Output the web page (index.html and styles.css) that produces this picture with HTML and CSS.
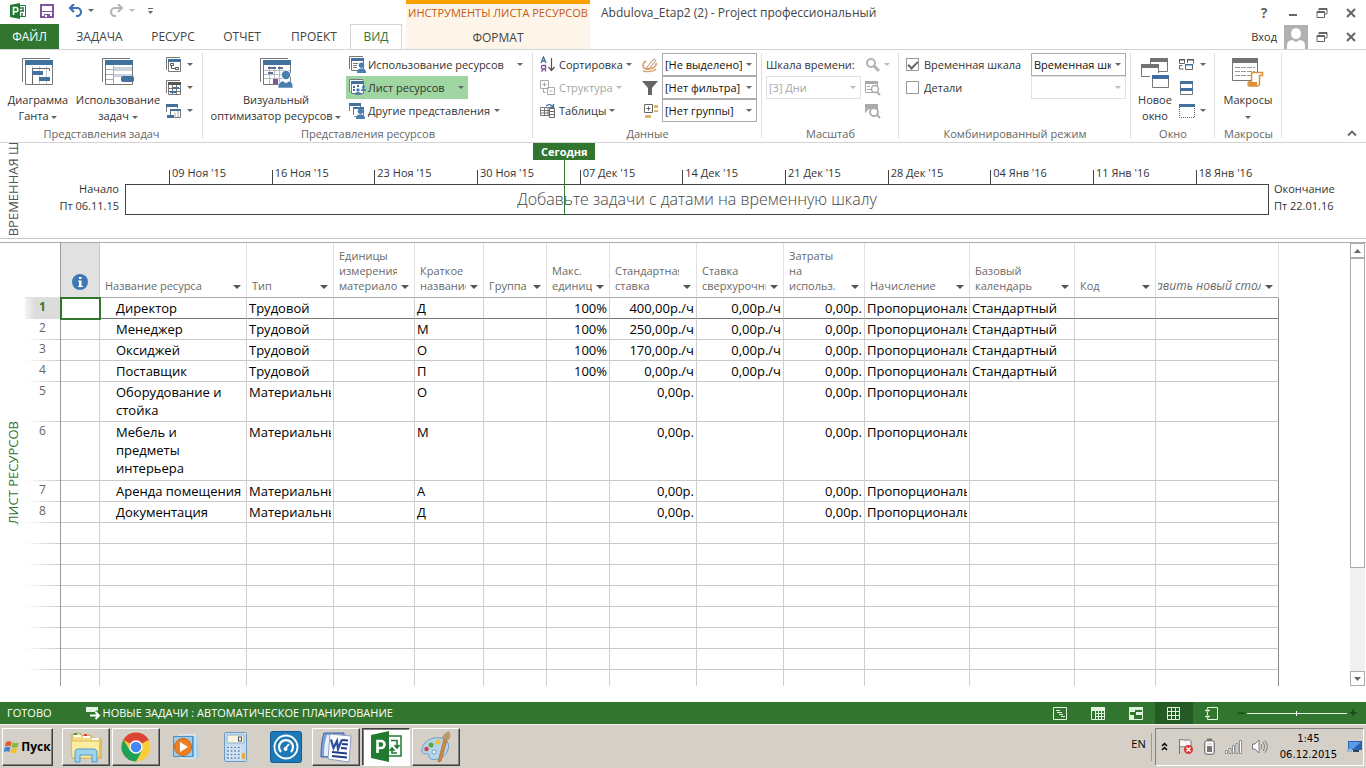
FILE: index.html
```html
<!DOCTYPE html>
<html lang="ru">
<head>
<meta charset="utf-8">
<title>Abdulova_Etap2 (2) - Project профессиональный</title>
<link rel="stylesheet" href="styles.css">
</head>
<body>
<svg class="defs" aria-hidden="true">
  <symbol id="restore" viewBox="0 0 12 12"><path d="M3 1.500h8v5.500h-2.500M3 1.500v2M3 2.500h8M1 4.500h7.500v6H1zM1 5.500h7.500" fill="none" stroke="#666"/></symbol>
  <symbol id="close" viewBox="0 0 12 12"><path d="M2 2l8 8M10 2l-8 8" stroke="#666" stroke-width="2"/></symbol>
  <symbol id="person" viewBox="0 0 10 12"><circle cx="5" cy="3.500" r="3" fill="#4a7db1"/><path d="M0 12c0-4 2-5 5-5s5 1 5 5z" fill="#4a7db1"/></symbol>
</svg>

<header class="head">
  <div class="head-left">
    <div class="qat">
      <svg class="logo" width="17" height="16" viewBox="0 0 17 16"><path d="M8 2.500h7.500v11H8" fill="#fff" stroke="#217346"/><path d="M10 5h4M10 8h4M12 10v3M13 6v2" stroke="#217346" stroke-width="1.500"/><path d="M0 2L10 0v16L0 14z" fill="#217a30"/><path d="M3.500 12V4.500h2.200a2 2 0 0 1 0 4.300H3.500" fill="none" stroke="#fff" stroke-width="1.600"/></svg>
      <button class="plain save" aria-label="Сохранить"><svg width="14" height="14" viewBox="0 0 14 14"><path d="M1 1h12v12H1z" fill="#fff" stroke="#80539f" stroke-width="2"/><path d="M2 7h10v1H2zM4 10h6v3H4z" fill="#80539f"/><path d="M5 11h2v2H5z" fill="#fff"/></svg></button>
      <button class="plain undo" aria-label="Отменить"><svg width="15" height="13" viewBox="0 0 15 13"><path d="M2 4h7a4 4 0 0 1 0 8H8M6 0L2 4l4 4" fill="none" stroke="#3b6fb6" stroke-width="2.200"/></svg><i class="arr"></i></button>
      <button class="plain redo" aria-label="Вернуть"><svg width="15" height="13" viewBox="0 0 15 13"><path d="M13 4H6a4 4 0 0 0 0 8h1M9 0l4 4-4 4" fill="none" stroke="#b5b5b5" stroke-width="2.200"/></svg><i class="arr dim"></i></button>
      <button class="plain more" aria-label="Настройка"><svg width="7" height="8" viewBox="0 0 7 8"><path d="M1 1.500h5" stroke="#666"/><path d="M1 4h5L3.500 7z" fill="#666"/></svg></button>
    </div>
    <nav class="tabs">
      <a href="#" class="file">ФАЙЛ</a><a href="#">ЗАДАЧА</a><a href="#">РЕСУРС</a><a href="#">ОТЧЕТ</a><a href="#">ПРОЕКТ</a><a href="#" class="on">ВИД</a>
    </nav>
  </div>
  <div class="context">
    <div class="context-name">ИНСТРУМЕНТЫ ЛИСТА РЕСУРСОВ</div>
    <a href="#">ФОРМАТ</a>
  </div>
  <div class="head-right">
    <div class="title-row">
      <h1>Abdulova_Etap2 (2) - Project профессиональный</h1>
      <div class="win">
        <button class="plain help" aria-label="Справка">?</button>
        <button class="plain" aria-label="Свернуть"><svg width="12" height="12"><path d="M2 8h8" stroke="#666" stroke-width="2"/></svg></button>
        <button class="plain" aria-label="Восстановить"><svg width="12" height="12"><use href="#restore"/></svg></button>
        <button class="plain" aria-label="Закрыть"><svg width="12" height="12"><use href="#close"/></svg></button>
      </div>
    </div>
    <div class="login-row">
      <a href="#">Вход</a>
      <svg class="avatar" width="24" height="24" viewBox="0 0 24 24"><path d="M0 0h24v24H0z" fill="#b1b1b1"/><ellipse cx="12" cy="8.500" rx="5" ry="5.500" fill="#fff"/><path d="M3 24v-4c0-3 2-4.500 5-5l4 2 4-2c3 .5 5 2 5 5v4z" fill="#fff"/></svg>
      <div class="win">
        <button class="plain" aria-label="Восстановить окно"><svg width="12" height="12"><use href="#restore"/></svg></button>
        <button class="plain" aria-label="Закрыть окно"><svg width="12" height="12"><use href="#close"/></svg></button>
      </div>
    </div>
  </div>
</header>

<section class="ribbon">
  <div class="group g-tasks">
    <div class="tools">
      <button class="big b-gantt"><svg width="32" height="28" viewBox="0 0 32 28"><path d="M.5 24V.5H28" fill="none" stroke="#777"/><path d="M3.500 3.500h27v23h-27z" fill="#fff" stroke="#777"/><path d="M3 2h28v5H3z" fill="#41719c"/><path d="M10.500 8v18M17.500 8v18M24.500 8v18" stroke="#c9cdd3"/><path d="M10.500 14v-3.500h17V13M10.500 17v9" fill="none" stroke="#666"/><path d="M10 13h11v4H10zM17 19h11v4H17z" fill="#41719c"/></svg><span>Диаграмма<br>Ганта <i class="arr"></i></span></button>
      <button class="big b-usage"><svg width="32" height="28" viewBox="0 0 32 28"><path d="M.5 24V.5H28" fill="none" stroke="#777"/><path d="M3.500 3.500h27v23h-27z" fill="#fff" stroke="#777"/><path d="M3 2h28v5H3z" fill="#41719c"/><path d="M12 9h18v4H12zM12 16h18v3H12z" fill="#ccd3dc"/><path d="M11.500 8v18M4 11.500h8M4 16.500h8M4 21.500h8" stroke="#aaa" fill="none"/><rect x="19" y="18" width="13" height="6" rx="2" fill="#41719c"/></svg><span>Использование<br>задач <i class="arr"></i></span></button>
      <div class="minis">
        <button class="plain" aria-label="Сетевой график"><svg width="16" height="16" viewBox="0 0 16 16"><path d="M.5 13V.5H14M2.500 2.500h12v12h-12z" fill="none" stroke="#777"/><path d="M2 2h13v3H2z" fill="#41719c"/><path d="M4.500 6.500h3v2h-3zM9.500 10.500h3v2h-3zM5.500 9v2.500h4" fill="none" stroke="#555"/></svg><i class="arr"></i></button>
        <button class="plain" aria-label="Календарь"><svg width="16" height="16" viewBox="0 0 16 16"><path d="M.5 13V.5H14M2.500 2.500h12v12h-12zM2 8.500h13M2 11.500h13M6.500 5v10M10.500 5v10" fill="none" stroke="#777"/><path d="M2 2h13v3H2z" fill="#555"/><path d="M7 7h6v2H7zM4 11h6v2H4z" fill="#41719c"/></svg><i class="arr"></i></button>
        <button class="plain" aria-label="Другие представления задач"><svg width="16" height="16" viewBox="0 0 16 16"><path d="M.5 9V1.500h11V5M4.500 13V6.500h10v8h-6" fill="#fff" stroke="#777"/><path d="M0 1h12v3H0zM4 6h11v2H4zM1 12h7v3H1z" fill="#41719c"/><path d="M9 10v4M12 8v6" stroke="#aaa"/></svg><i class="arr"></i></button>
      </div>
    </div>
    <h2>Представления задач</h2>
  </div>

  <div class="group g-res">
    <div class="tools">
      <button class="big b-planner"><svg width="33" height="30" viewBox="0 0 33 30"><path d="M.5 24V.5H28" fill="none" stroke="#777"/><path d="M3.500 3.500h27v23h-27z" fill="#fff" stroke="#777"/><path d="M3 2h28v5H3z" fill="#41719c"/><path d="M4 12.500h26M4 16.500h26M4 20.500h20M9.500 8v18M14.500 8v18M19.500 8v18" stroke="#b5bac3"/><path d="M8 9h8v2H8zM18 9h5v2h-5zM8 14h5v2H8z" fill="#5f6f8c"/><path d="M13 21h5v5h-5z" fill="#80539f"/><g transform="translate(18 12)"><circle cx="8" cy="5" r="5" fill="#fff"/><circle cx="8" cy="5" r="4.200" fill="#4a7db1"/><path d="M0 18c0-5 3-7 5-7l3 2 3-2c2 0 4 2 4 7z" fill="#4a7db1" stroke="#fff" stroke-width=".6"/></g></svg><span>Визуальный<br>оптимизатор ресурсов <i class="arr"></i></span></button>
      <div class="rows r-views">
        <button class="row"><svg width="17" height="17" viewBox="0 0 17 17"><path d="M.5 13V.5H14M2.500 2.500h12v12h-12z" fill="#fff" stroke="#777"/><path d="M2 2h13v3H2z" fill="#41719c"/><path d="M4 7.500h5M4 9.500h4M4 11.500h4" stroke="#777"/><use href="#person" x="8" y="6" width="9" height="11"/></svg>Использование ресурсов<i class="arr push"></i></button>
        <button class="row sel"><svg width="17" height="17" viewBox="0 0 17 17"><path d="M.5 13V.5H14M2.500 2.500h12v12h-12z" fill="#fff" stroke="#777"/><path d="M2 2h13v3H2z" fill="#41719c"/><path d="M4 8h2M4 11h2M8 7h2" stroke="#41719c" stroke-width="2"/><use href="#person" x="6" y="9" width="6" height="7"/><use href="#person" x="12" y="6" width="5" height="6"/></svg>Лист ресурсов<i class="arr push"></i></button>
        <button class="row"><svg width="17" height="17" viewBox="0 0 17 17"><path d="M.5 9V1.500h11V5M4.500 13V5.500h10v9h-9" fill="#fff" stroke="#777"/><path d="M0 1h12v3H0zM4 5h11v2H4z" fill="#41719c"/><use href="#person" x="7" y="6" width="9" height="11"/></svg>Другие представления<i class="arr next"></i></button>
      </div>
    </div>
    <h2>Представления ресурсов</h2>
  </div>

  <div class="group g-data">
    <div class="tools">
      <div class="rows">
        <button class="row"><svg width="16" height="17" viewBox="0 0 16 17"><path d="M1 7l2.500-6L6 7M2 5h3" fill="none" stroke="#41719c" stroke-width="1.300"/><path d="M5.500 15.500V9.500H3a1.500 1.500 0 0 0 0 3.500h2.500M3.500 13l-2 2.500" fill="none" stroke="#80539f" stroke-width="1.300"/><path d="M11.500 2v12M8.500 11l3 3.500 3-3.500" fill="none" stroke="#555" stroke-width="1.200"/></svg>Сортировка<i class="arr"></i></button>
        <button class="row off" disabled><svg width="16" height="16" viewBox="0 0 16 16"><path d="M.5.500h8v8h-8zM2.500 4.500h4M4.500 2.500v4M7.500 7.500h7v7h-7zM9.500 11h3M3.500 9v3.500H6" fill="#fff" stroke="#aaa"/></svg>Структура<i class="arr dim"></i></button>
        <button class="row"><svg width="16" height="16" viewBox="0 0 16 16"><path d="M.5 4.500h11v8H.5zM0 7.500h12M0 10h12M4.500 4v9M8 4v9" fill="none" stroke="#777"/><path d="M9.500 5.500h5v9h-5zM9 8.500h6M9 11.500h6" fill="#fff" stroke="#666"/><path d="M6 3c2-2 5-2 7 1M13.500 1v3.500H10" fill="none" stroke="#41719c" stroke-width="1.400"/></svg>Таблицы<i class="arr"></i></button>
      </div>
      <div class="pairs">
        <div class="pair"><svg width="16" height="16" viewBox="0 0 16 16"><path d="M4 4C0 6 0 12 5 12s10-2 9-6" fill="none" stroke="#dba46c" stroke-width="1.800"/><path d="M1 14c5 1 10 1 13-2" fill="none" stroke="#dba46c" stroke-width="1.300"/><path d="M5 10l7-8 2 1.500-7 8-2.500.5z" fill="#fff" stroke="#bc8a68"/></svg><span class="combo"><select aria-label="Выделение"><option>[Не выделено]</option></select></span></div>
        <div class="pair"><svg width="16" height="16" viewBox="0 0 16 16"><path d="M0 1h16L10 8v7H6V8z" fill="#666"/></svg><span class="combo"><select aria-label="Фильтр"><option>[Нет фильтра]</option></select></span></div>
        <div class="pair"><svg width="16" height="16" viewBox="0 0 16 16"><path d="M2.500 1.500h8v8h-8zM4.500 5.500h4M6.500 3.500v4" fill="#fff" stroke="#666"/><path d="M12 2h4v3h-4zM12 7h4v2h-4zM3 12h6v3H3z" fill="#dcb66d"/></svg><span class="combo"><select aria-label="Группировка"><option>[Нет группы]</option></select></span></div>
      </div>
    </div>
    <h2>Данные</h2>
  </div>

  <div class="group g-zoom">
    <div class="tools">
      <div class="rows">
        <label class="row" for="scale">Шкала времени:</label>
        <span class="combo off"><select id="scale" disabled><option>[3] Дни</option></select></span>
      </div>
      <div class="minis">
        <button class="plain" disabled aria-label="Масштаб"><svg width="16" height="16" viewBox="0 0 16 16"><circle cx="6" cy="6" r="4" fill="none" stroke="#b3b3b3" stroke-width="2"/><path d="M9 9l5 5" stroke="#b3b3b3" stroke-width="3"/></svg><i class="arr dim"></i></button>
        <button class="plain" disabled aria-label="Весь проект"><svg width="16" height="16" viewBox="0 0 16 16"><path d="M.5 1.500h12v11H.5z" fill="none" stroke="#aaa"/><path d="M0 1h13v3H0zM2 6h3v1H2zM2 9h4v1H2z" fill="#aaa"/><circle cx="10" cy="9" r="3.500" fill="#fff" stroke="#aaa" stroke-width="1.500"/><path d="M12 12l3 3" stroke="#aaa" stroke-width="2"/></svg></button>
        <button class="plain" disabled aria-label="Выделенные задачи"><svg width="16" height="16" viewBox="0 0 16 16"><path d="M0 1h13v5H4l-4 4z" fill="#aaa"/><circle cx="9" cy="9" r="4" fill="#fff" stroke="#aaa" stroke-width="1.800"/><path d="M12 12l3 3" stroke="#aaa" stroke-width="2"/></svg></button>
      </div>
    </div>
    <h2>Масштаб</h2>
  </div>

  <div class="group g-split">
    <div class="tools">
      <div class="rows">
        <label class="row check"><input type="checkbox" checked>Временная шкала</label>
        <label class="row check"><input type="checkbox">Детали</label>
      </div>
      <div class="rows">
        <span class="combo"><select aria-label="Временная шкала"><option>Временная шкала</option></select></span>
        <span class="combo off"><select aria-label="Детали" disabled><option></option></select></span>
      </div>
    </div>
    <h2>Комбинированный режим</h2>
  </div>

  <div class="group g-window">
    <div class="tools">
      <button class="big b-new"><svg width="28" height="32" viewBox="0 0 28 32"><path d="M9.500 1.500h17v12h-17z" fill="#fff" stroke="#777"/><path d="M9 0h18v4H9z" fill="#737373"/><path d="M.5 7.500h17v11H.5z" fill="#fff" stroke="#777"/><path d="M0 6h18v4H0z" fill="#737373"/><path d="M9 15h19v16H9z" fill="#fff"/><path d="M11.500 17.500h16v12h-16z" fill="#fff" stroke="#777"/><path d="M11 17h17v4H11z" fill="#3c6ea5"/></svg><span>Новое<br>окно</span></button>
      <div class="minis">
        <button class="plain" aria-label="Переключить окна"><svg width="16" height="16" viewBox="0 0 16 16"><path d="M.5 2.500h5v4h-5zM8.500 6V2.500h6v4M.5 12V8.500h3M.5 12h4M6.500 7.500h7v5h-7z" fill="none" stroke="#666"/><path d="M0 2h6v1.500H0zM8 2h7v1.500H8z" fill="#555"/><path d="M6 7h8v1.500H6z" fill="#41719c"/></svg><i class="arr"></i></button>
        <button class="plain" aria-label="Упорядочить все"><svg width="16" height="16" viewBox="0 0 16 16"><path d="M1.500 1.500h12v13h-12z" fill="#fff" stroke="#777"/><path d="M1 1h13v3H1zM1 8h13v3H1z" fill="#41719c"/></svg></button>
        <button class="plain" aria-label="Скрыть"><svg width="16" height="16" viewBox="0 0 16 16"><path d="M0 1h16v3H0z" fill="#41719c"/><path d="M.5 4v10.500h15V4" fill="none" stroke="#666" stroke-dasharray="1 1"/></svg><i class="arr"></i></button>
      </div>
    </div>
    <h2>Окно</h2>
  </div>

  <div class="group g-macro">
    <div class="tools">
      <button class="big"><svg width="32" height="29" viewBox="0 0 32 29"><path d="M.5.500h25v22H.5z" fill="#fff" stroke="#777"/><path d="M0 0h26v5H0z" fill="#737373"/><path d="M3 9.500h20M3 13.500h20M3 17.500h16" stroke="#999" stroke-dasharray="5 1"/><path d="M19.500 24V16c0-1.500 1-1.500 2-1.500h9v3h-3V26c0 1-1 2-2 2h-8c-1.500 0-2-2-1-4z" fill="#fff" stroke="#dc8f3c" stroke-width="1.500"/><path d="M16 24h9v4h-8z" fill="#dc8f3c"/></svg><span>Макросы<br><i class="arr"></i></span></button>
    </div>
    <h2>Макросы</h2>
  </div>
  <button class="plain collapse" aria-label="Свернуть ленту"><svg width="10" height="7" viewBox="0 0 10 7"><path d="M1 5.500L5 1.500l4 4" fill="none" stroke="#666" stroke-width="1.800"/></svg></button>
</section>

<section class="timeline">
  <div class="side"><span>ВРЕМЕННАЯ ШКАЛА</span></div>
  <div class="edge start">Начало<br>Пт 06.11.15</div>
  <div class="track">
    <div class="ticks"><i></i><span>09 Ноя '15</span><span>16 Ноя '15</span><span>23 Ноя '15</span><span>30 Ноя '15</span><span>07 Дек '15</span><span>14 Дек '15</span><span>21 Дек '15</span><span>28 Дек '15</span><span>04 Янв '16</span><span>11 Янв '16</span><span>18 Янв '16</span></div>
    <div class="bar">Добавьте задачи с датами на временную шкалу</div>
    <div class="today"><b>Сегодня</b></div>
  </div>
  <div class="edge">Окончание<br>Пт 22.01.16</div>
</section>

<main class="sheet">
  <div class="side green"><span>ЛИСТ РЕСУРСОВ</span></div>
  <div class="grid">
    <table>
      <colgroup><col class="c36"><col class="c39"><col class="c147"><col class="c87"><col class="c81"><col class="c69"><col class="c63"><col class="c63"><col class="c87"><col class="c87"><col class="c81"><col class="c105"><col class="c105"><col class="c81"><col class="c123"></colgroup>
      <thead><tr>
        <th class="num"></th>
        <th class="info"><svg width="16" height="16" viewBox="0 0 16 16"><circle cx="8" cy="8" r="8" fill="#3f78b5"/><path d="M7 3h2.500v2H7zM6 6.500h3.500V12H11v1H6v-1h1V7.500H6z" fill="#fff"/></svg></th>
        <th><div class="h"><span>Название ресурса</span><i></i></div></th>
        <th><div class="h"><span>Тип</span><i></i></div></th>
        <th><div class="h"><span>Единицы<br>измерения<br>материалов</span><i></i></div></th>
        <th><div class="h"><span>Краткое<br>название</span><i></i></div></th>
        <th><div class="h"><span>Группа</span><i></i></div></th>
        <th><div class="h"><span>Макс.<br>единиц</span><i></i></div></th>
        <th><div class="h"><span>Стандартная<br>ставка</span><i></i></div></th>
        <th><div class="h"><span>Ставка<br>сверхурочных</span><i></i></div></th>
        <th><div class="h"><span>Затраты<br>на<br>использ.</span><i></i></div></th>
        <th><div class="h"><span>Начисление</span><i></i></div></th>
        <th><div class="h"><span>Базовый<br>календарь</span><i></i></div></th>
        <th><div class="h"><span>Код</span><i></i></div></th>
        <th><div class="h add"><span>Добавить новый столбец</span><i></i></div></th>
      </tr></thead>
      <tbody>
        <tr class="cur"><td class="num">1<td class="pick"><td class="name">Директор<td>Трудовой<td><td>Д<td><td class="r">100%<td class="r">400,00р./ч<td class="r">0,00р./ч<td class="r">0,00р.<td><div>Пропорциональное</div><td>Стандартный<td><td></tr>
        <tr><td class="num">2<td><td class="name">Менеджер<td>Трудовой<td><td>М<td><td class="r">100%<td class="r">250,00р./ч<td class="r">0,00р./ч<td class="r">0,00р.<td><div>Пропорциональное</div><td>Стандартный<td><td></tr>
        <tr><td class="num">3<td><td class="name">Оксиджей<td>Трудовой<td><td>О<td><td class="r">100%<td class="r">170,00р./ч<td class="r">0,00р./ч<td class="r">0,00р.<td><div>Пропорциональное</div><td>Стандартный<td><td></tr>
        <tr><td class="num">4<td><td class="name">Поставщик<td>Трудовой<td><td>П<td><td class="r">100%<td class="r">0,00р./ч<td class="r">0,00р./ч<td class="r">0,00р.<td><div>Пропорциональное</div><td>Стандартный<td><td></tr>
        <tr class="two"><td class="num">5<td><td class="name">Оборудование и<br>стойка<td><div>Материальный</div><td><td>О<td><td><td class="r">0,00р.<td><td class="r">0,00р.<td><div>Пропорциональное</div><td><td><td></tr>
        <tr class="three"><td class="num">6<td><td class="name">Мебель и<br>предметы<br>интерьера<td><div>Материальный</div><td><td>М<td><td><td class="r">0,00р.<td><td class="r">0,00р.<td><div>Пропорциональное</div><td><td><td></tr>
        <tr><td class="num">7<td><td class="name">Аренда помещения<td><div>Материальный</div><td><td>А<td><td><td class="r">0,00р.<td><td class="r">0,00р.<td><div>Пропорциональное</div><td><td><td></tr>
        <tr><td class="num">8<td><td class="name">Документация<td><div>Материальный</div><td><td>Д<td><td><td class="r">0,00р.<td><td class="r">0,00р.<td><div>Пропорциональное</div><td><td><td></tr>
        <tr><td class="num"><td><td><td><td><td><td><td><td><td><td><td><td><td><td></tr>
        <tr><td class="num"><td><td><td><td><td><td><td><td><td><td><td><td><td><td></tr>
        <tr><td class="num"><td><td><td><td><td><td><td><td><td><td><td><td><td><td></tr>
        <tr><td class="num"><td><td><td><td><td><td><td><td><td><td><td><td><td><td></tr>
        <tr><td class="num"><td><td><td><td><td><td><td><td><td><td><td><td><td><td></tr>
        <tr><td class="num"><td><td><td><td><td><td><td><td><td><td><td><td><td><td></tr>
        <tr><td class="num"><td><td><td><td><td><td><td><td><td><td><td><td><td><td></tr>
        <tr><td class="num"><td><td><td><td><td><td><td><td><td><td><td><td><td><td></tr>
      </tbody>
    </table>
  </div>
  <div class="scroll">
    <button aria-label="Вверх"><svg width="7" height="4" viewBox="0 0 7 4"><path d="M0 4h7L3.500 0z" fill="#666"/></svg></button>
    <div class="rail"><div class="thumb"></div></div>
    <button aria-label="Вниз"><svg width="7" height="4" viewBox="0 0 7 4"><path d="M0 0h7L3.500 4z" fill="#666"/></svg></button>
  </div>
</main>

<footer class="status">
  <span class="ready">ГОТОВО</span>
  <button class="mode"><svg width="15" height="13" viewBox="0 0 15 13"><path d="M0 0h12v5H0z" fill="#e4f4e4"/><path d="M3 8.500h9M9.500 4.500l4 4-4 4" fill="none" stroke="#31752f" stroke-width="4"/><path d="M4 8.500h8M9.500 5l3.500 3.500L9.500 12" fill="none" stroke="#fff" stroke-width="2"/></svg>НОВЫЕ ЗАДАЧИ : АВТОМАТИЧЕСКОЕ ПЛАНИРОВАНИЕ</button>
  <div class="views">
    <button aria-label="Диаграмма Ганта"><svg width="14" height="13" viewBox="0 0 14 13"><path d="M.5.500h13v12H.5zM3 3.500h4M4 5.500h5M6 7.500h4M8 9.500h4" fill="none" stroke="#dff3df"/></svg></button>
    <button aria-label="Использование задач"><svg width="14" height="13" viewBox="0 0 14 13"><path d="M0 0h14v4H0z" fill="#dff3df"/><path d="M.5 0v12.500h13V0M4.500 4v9M7.500 4v9M10.500 4v9M4 6.500h10M4 9.500h10" fill="none" stroke="#dff3df"/></svg></button>
    <button aria-label="Визуальный оптимизатор"><svg width="14" height="13" viewBox="0 0 14 13"><path d="M.5.500h13v12H.5z" fill="none" stroke="#dff3df"/><path d="M0 0h14v3H6v2H0zM0 8h5v5H0zM7 5h7v3H7z" fill="#dff3df"/></svg></button>
    <button class="on" aria-label="Лист ресурсов"><svg width="13" height="13" viewBox="0 0 13 13"><path d="M.5.500h12v12H.5zM4.500 0v13M8.500 0v13M0 4.500h13M0 8.500h13" fill="none" stroke="#dff3df"/></svg></button>
    <button aria-label="Отчет"><svg width="13" height="13" viewBox="0 0 13 13"><path d="M2.500 2V.5h10v12h-10V11M2.500 5v3M0 3.500h5M0 9.500h5" fill="none" stroke="#dff3df"/><path d="M1 2.500h3v2H1zM1 8.500h3v2H1z" fill="#dff3df"/></svg></button>
  </div>
  <div class="zoom"><button aria-label="Мельче">−</button><input type="range" aria-label="Масштаб" value="50"><button aria-label="Крупнее">+</button></div>
</footer>

<div class="taskbar">
  <button class="app frame start-btn"><svg width="16" height="16" viewBox="0 0 16 16"><path d="M2 3c2-1 4-1 5.500 0L6.500 7.500C5 6.500 3 6.500 1 7.500z" fill="#e2582a"/><path d="M8.500 3.500c2 1 4 1 6 0L13.500 8c-2 1-4 1-6 0z" fill="#86b93a"/><path d="M.8 8.500c2-1 4-1 5.500 0L5.300 13c-1.500-1-3.500-1-5.500 0z" fill="#3e86cf"/><path d="M7.200 9c2 1 4 1 6 0l-1 4.500c-2 1-4 1-6 0z" fill="#f3c02f"/></svg>Пуск</button>
  <button class="app frame" aria-label="Проводник"><svg width="34" height="32" viewBox="0 0 34 32"><path d="M3 3l8-1 2 3 8-1 2 3 9 1v19H3z" fill="#f3dc83" stroke="#c9a63f"/><path d="M5 5h7M14 6h7M23 8h7" stroke="#fff" stroke-width="2"/><path d="M5 3h3" stroke="#3a9a4e" stroke-width="2"/><path d="M15 4h3" stroke="#cf4a36" stroke-width="2"/><path d="M2 10h29l-1 17H3z" fill="#fbec9f" stroke="#d9bc58"/><path d="M6 31v-9c0-3 1-4 4-4h14c3 0 4 1 4 4v9h-5v-7H11v7z" fill="#9fd2ee" stroke="#4f9bc8"/></svg></button>
  <button class="app frame" aria-label="Chrome"><svg width="30" height="30" viewBox="0 0 30 30"><circle cx="15" cy="15" r="14.500" fill="#f9cc3c"/><path d="M15 15L2.400 7.700A14.500 14.500 0 0 1 27.600 7.700z" fill="#dc4437"/><path d="M2.400 7.700A14.500 14.500 0 0 0 15 29.500L21 18.500 15 15 9 18.500z" fill="#22a058"/><path d="M15 8.300h12.900L26 6 15 5z" fill="#dc4437"/><circle cx="15" cy="15" r="6.700" fill="#fff"/><circle cx="15" cy="15" r="5.300" fill="#4587f3"/></svg></button>
  <button class="app" aria-label="Проигрыватель"><svg width="28" height="28" viewBox="0 0 28 28"><path d="M12 3h13l2 20-3 3H12z" fill="#a7d0ea"/><path d="M8 2h15v23H8z" fill="#74b2dc" stroke="#fff"/><path d="M1.500 3.500h19v20h-19z" fill="#9fcbe8" stroke="#4d8fc0"/><circle cx="11" cy="14" r="8.500" fill="#ef7f22" stroke="#cf6413"/><path d="M8 9v10l8-5z" fill="#fff"/></svg></button>
  <button class="app" aria-label="Калькулятор"><svg width="24" height="30" viewBox="0 0 24 30"><rect x=".5" y=".5" width="22" height="29" rx="1" fill="#c5dcf0" stroke="#6d98c2"/><path d="M3 3h17v8H3z" fill="#fbf3dc" stroke="#8fb3d2"/><rect x="14.500" y="5" width="3" height="4" fill="none" stroke="#456"/><path d="M3 15.500h14M3 19h14M3 22.500h14M3 26h14" stroke="#fff" stroke-width="2.500" stroke-dasharray="2.600 1"/><path d="M3 15.500h14M3 19h14M3 22.500h14M3 26h14" stroke="#517faa" stroke-width="1.500" stroke-dasharray="2 1.600"/><path d="M18 21h3v6h-3z" fill="#e8ad37"/></svg></button>
  <button class="app" aria-label="Монитор"><svg width="32" height="32" viewBox="0 0 32 32"><rect x=".5" y=".5" width="31" height="31" rx="2" fill="#1d78b8" stroke="#125a90"/><circle cx="16" cy="16" r="11.500" fill="none" stroke="#fff" stroke-width="1.800"/><path d="M11 21a7 7 0 1 1 10 0" fill="none" stroke="#fff" stroke-width="2.200"/><path d="M15 18l4-5" stroke="#fff" stroke-width="2"/><circle cx="15.500" cy="18" r="2" fill="#fff"/></svg></button>
  <button class="app frame" aria-label="Word"><svg width="32" height="32" viewBox="0 0 32 32"><path d="M4 2h20v24H1C1 15 2 8 4 2z" fill="#7fa0d6" stroke="#365fa8"/><path d="M7 4h14v21H4c0-9 1-15 3-21z" fill="#e8effa"/><path d="M10 3l21 2-2 26-21-3z" fill="#fdfdff" stroke="#8b9fc4"/><path d="M22 9l6 .5M22 13l6 .5M21 17l6 .5M12 21l15 1.500M12 25l15 1.500" stroke="#1f3c88" stroke-width="2"/><path d="M11 8.500l2.500 8.500 3.500-7 1 8 4-9.500" fill="none" stroke="#2c4fa0" stroke-width="2.200"/></svg></button>
  <button class="app active" aria-label="Project"><svg width="31" height="31" viewBox="0 0 31 31"><path d="M17 5h13v20H17" fill="#fff" stroke="#217a30" stroke-width="1.500"/><path d="M20 9.500h6V16M23.500 14l2.500 3 2.500-3M26 22h-5v-4M18.500 20l2.500-3 2.500 3" fill="none" stroke="#217a30" stroke-width="1.600"/><path d="M0 4L18 0v31L0 27z" fill="#217a30"/><path d="M6.500 22V10H10a3.500 3.500 0 0 1 0 7H7" fill="none" stroke="#fff" stroke-width="2.600"/></svg></button>
  <button class="app frame" aria-label="Paint"><svg width="32" height="32" viewBox="0 0 32 32"><path d="M2 21C1 11 12 5 21 7c8 2 9 8 6 14s-11 9-16 7c-3-1-1-4-3-5s-5 1-6-2z" fill="#b5d4ea" stroke="#6f9cc0"/><circle cx="11" cy="14" r="2.500" fill="#57a843"/><circle cx="18" cy="11" r="2.500" fill="#e9c432"/><circle cx="6.500" cy="18" r="2.200" fill="#d0453b"/><circle cx="14" cy="21" r="2" fill="#fff" stroke="#6f9cc0"/><path d="M24 8l3 1-6 21-3 1 1-4z" fill="#d8893c" stroke="#8d5b2c" stroke-width=".6"/><path d="M22 8c0-4 3-6 7-8 2 4 2 7-1 9z" fill="#b79b6c"/></svg></button>
  <div class="tray-area">
    <span class="lang">EN</span>
    <div class="tray">
      <svg width="7" height="10" viewBox="0 0 7 10"><path d="M1 4l2.500-2.500L6 4M1 8l2.500-2.500L6 8" fill="none" stroke="#000" stroke-width="1.500"/></svg>
      <svg width="16" height="17" viewBox="0 0 16 17"><path d="M1.500 1v15M2 2c3-1.500 4 1 7 0 2-.7 3 0 4 1v6c-2-1-4 0-6 0s-3-1-5 0" fill="#f4f4f4" stroke="#777"/><circle cx="10.500" cy="11.500" r="4.500" fill="#d63a34"/><path d="M8.500 9.500l4 4M12.500 9.500l-4 4" stroke="#fff" stroke-width="1.500"/></svg>
      <svg width="11" height="17" viewBox="0 0 11 17"><rect x=".8" y="2.800" width="9.400" height="13.400" rx="2" fill="#fff" stroke="#555"/><path d="M3 .5h5v2H3z" fill="#777"/><path d="M3 8h5v6H3z" fill="#777"/><path d="M3 5h5v2H3z" fill="#ddd"/></svg>
      <svg width="17" height="14" viewBox="0 0 17 14"><path d="M.5 10.500h2v3h-2zM4 8.500h2v5H4zM7.500 5.500h2v8h-2zM11 3.500h2v10h-2zM14.500.500h2v13h-2z" fill="#fff" stroke="#777" stroke-width=".8"/></svg>
      <svg width="16" height="15" viewBox="0 0 16 15"><path d="M.5 5h2.500L7 1v13L3 10H.5z" fill="#fff" stroke="#777"/><path d="M9 5c1 1.500 1 3.500 0 5M11 3c2 3 2 6 0 9M13 1.500c3 4 3 8 0 12" fill="none" stroke="#777"/></svg>
      <time>1:45<br>06.12.2015</time>
      <svg width="15" height="13" viewBox="0 0 15 13"><path d="M1 1h14v9H1z" fill="#2a62b8"/><path d="M2 2h12l-8 7H2z" fill="#5e9ade"/><path d="M0 9h5v3H0z" fill="#8fbce8"/><path d="M6 10h6v2H6z" fill="#345"/></svg>
    </div>
  </div>
</div>
</body>
</html>
```

FILE: styles.css
```css
* { box-sizing: border-box; }
html, body { height: 100%; }
body {
  margin: 0;
  display: flex;
  flex-direction: column;
  overflow: hidden;
  background: #fff;
  color: #333;
  font: 12px/16px "Open Sans", "Noto Sans", sans-serif;
}
button, select, input { font: inherit; color: inherit; }
button { border: 0; background: none; padding: 0; white-space: nowrap; }
a { color: inherit; text-decoration: none; }
h1, h2 { margin: 0; font: inherit; }
svg { display: block; flex: none; }
.defs { position: absolute; width: 0; height: 0; }
.plain { display: flex; align-items: center; gap: 5px; }
.arr {
  display: inline-block;
  flex: none;
  border: 3px solid transparent;
  border-top-color: #666;
  border-bottom: 0;
  vertical-align: middle;
}
.arr.dim { border-top-color: #bbb; }

/* header */
.head { display: flex; height: 50px; flex: none; border-bottom: 1px solid #d4d4d4; }
.head-left { width: 406px; flex: none; display: flex; flex-direction: column; }
.qat { height: 25px; display: flex; align-items: center; padding: 0 0 3px 10px; }
.save { margin-left: 13px; }
.undo { margin-left: 14px; }
.redo { margin-left: 15px; }
.more { margin-left: 12px; }
.tabs { display: grid; grid-template-columns: 59px 81px 66px 72px 72px 52px; height: 25px; line-height: 25px; text-align: center; color: #444; }
.tabs a { height: 25px; }
.tabs .file { background: #31752f; color: #fff; }
.tabs .on { color: #31752f; border: 1px solid #d4d4d4; border-bottom: 0; background: #fff; line-height: 23px; }
.context { width: 184px; flex: none; border-top: 4px solid #f9a100; background: #fdf5ea; text-align: center; white-space: nowrap; }
.context-name { color: #c55a11; line-height: 18px; height: 21px; font-size: 11px; }
.context a { display: block; line-height: 25px; color: #444; }
.head-right { flex: 1; min-width: 0; }
.title-row { height: 25px; display: flex; align-items: center; padding-left: 11px; white-space: nowrap; }
.title-row h1 { flex: 1; min-width: 0; color: #444; }
.win { display: flex; gap: 17px; align-items: center; padding-right: 9px; }
.help { width: 12px; justify-content: center; font-weight: 700; font-size: 14px; color: #666; }
.login-row { height: 24px; display: flex; align-items: center; justify-content: flex-end; font-size: 11px; }
.login-row .avatar { margin: 0 8px 0 7px; }

/* ribbon */
.ribbon { display: flex; flex: none; height: 93px; border-bottom: 1px solid #d4d4d4; padding-top: 3px; font-size: 11px; }
.group { display: flex; flex-direction: column; flex: none; background: linear-gradient(#dedede, #dedede) right top / 1px 85px no-repeat; }
.group h2 { color: #666; text-align: center; line-height: 16px; white-space: nowrap; margin-top: auto; }
.tools { display: flex; height: 71px; }
.g-tasks { width: 203px; }
.g-res { width: 330px; }
.g-data { width: 229px; }
.g-zoom { width: 137px; }
.g-split { width: 232px; }
.g-window { width: 84px; }
.g-macro { width: 67px; }
.big { display: flex; flex-direction: column; align-items: center; justify-content: space-between; padding-top: 5px; flex: none; }
.big span { display: block; text-align: center; }
.b-gantt { width: 76px; }
.b-usage { width: 84px; }
.b-planner { width: 136px; margin-left: 5px; }
.b-new { width: 48px; }
.g-macro .big { width: 66px; }
.minis { display: grid; grid-template-rows: repeat(3, 23px); align-content: start; margin-left: 6px; }
.rows { display: flex; flex-direction: column; flex: none; }
.row { height: 23px; display: flex; align-items: center; gap: 3px; white-space: nowrap; }
.row.off { color: #a6a6a6; }
.row .push { margin-left: auto; }
.row .next { margin-left: 2px; }
.r-views { align-items: flex-start; margin-left: 2px; width: 181px; }
.r-views .row { padding: 0 4px 0 3px; gap: 2px; }
.r-views .row:first-child { width: 100%; }
.r-views .row.sel { background: #9fd5a0; width: 122px; }
.g-data .tools { padding: 0 5px 0 7px; justify-content: space-between; }
.pair { display: flex; align-items: center; gap: 4px; height: 23px; }
.combo { display: block; position: relative; width: 95px; height: 23px; border: 1px solid #ababab; color: #111; }
.combo::after { content: ""; position: absolute; right: 4px; top: 9px; border: 3px solid transparent; border-top-color: #666; border-bottom: 0; }
.combo select { appearance: none; border: 0; background: none; padding: 0 14px 0 2px; width: 100%; height: 100%; outline: 0; opacity: 1; }
.combo.off { border-color: #e1e1e1; color: #a6a6a6; }
.combo.off::after { border-top-color: #bbb; }
.g-zoom .tools { padding-left: 4px; }
.g-zoom .minis { margin-left: 4px; }
.g-zoom .plain { gap: 3px; }
.g-split .tools { padding: 0 5px 0 7px; justify-content: space-between; }
.check { gap: 5px; }
.check input { appearance: none; width: 13px; height: 13px; margin: 0; border: 1px solid #999; display: grid; place-items: center; }
.check input:checked::before { content: ""; width: 8px; height: 4px; border: solid #666; border-width: 0 0 2px 2px; transform: translateY(-1px) rotate(-45deg); }
.g-window .minis { margin-left: 0; }
.collapse { margin: auto 9px 5px auto; }

/* timeline */
.side { width: 25px; flex: none; display: flex; align-items: center; justify-content: center; overflow: hidden; font-size: 13px; color: #555; }
.side span { writing-mode: vertical-rl; transform: rotate(180deg); white-space: nowrap; }
.side.green { color: #31752f; }
.timeline { display: flex; flex: none; height: 96px; border-bottom: 1px solid #c6c6c6; color: #333; font-size: 11px; }
.timeline .side { align-items: flex-end; padding-bottom: 2px; }
.edge { width: 97px; flex: none; padding: 37px 5px 0; line-height: 17px; white-space: nowrap; }
.edge.start { width: 100px; padding-right: 6px; text-align: right; }
.track { flex: 1; min-width: 0; position: relative; padding-top: 23px; }
.ticks { display: grid; grid-template-columns: minmax(0, 3fr) repeat(10, minmax(0, 7fr)) minmax(0, 5fr); height: 18px; }
.ticks span { padding-left: 3px; line-height: 14px; white-space: nowrap; background: linear-gradient(#444, #444) left bottom / 1px 14px no-repeat; }
.bar { height: 31px; border: 1px solid #444; text-align: center; font-size: 16px; font-weight: 300; line-height: 29px; color: #444; }
.today { position: absolute; left: 38.4%; top: 0; height: 72px; border-left: 1px solid #31752f; }
.today b { position: absolute; top: 0; left: -32px; width: 62px; height: 17px; line-height: 17px; background: #31752f; color: #fff; text-align: center; }

/* resource sheet */
.sheet { flex: 1; min-height: 0; display: flex; margin-top: 3px; border-top: 1px solid #ababab; }
.grid { flex: 1; min-width: 0; overflow: hidden; margin-bottom: 16px; }
table { border-collapse: separate; border-spacing: 0; table-layout: fixed; width: 1254px; }
.c36 { width: 36px; } .c39 { width: 39px; } .c147 { width: 147px; } .c87 { width: 87px; } .c81 { width: 81px; }
.c69 { width: 69px; } .c63 { width: 63px; } .c105 { width: 105px; } .c123 { width: 123px; }
th { height: 55px; padding: 0; vertical-align: bottom; font-weight: 400; text-align: left; color: #6a6a6a; font-size: 11px; line-height: 15px; border-right: 1px solid #e1e1e1; border-bottom: 1px solid #ababab; }
th.num { border-bottom-color: #e1e1e1; }
th.num, td.num { border-right-color: #999; }
th.info { background: #e1e1e1; padding: 0 0 7px 11px; border-right-color: #c6c6c6; }
.h { display: flex; align-items: flex-end; justify-content: space-between; padding: 0 5px 4px; gap: 4px; }
.h span { min-width: 0; overflow: hidden; white-space: nowrap; }
.h i { flex: none; border: 4px solid transparent; border-top-color: #555; border-bottom: 0; margin-bottom: 4px; }
.h.add { padding-left: 2px; font-style: italic; font-size: 12px; }
.h.add span { display: flex; justify-content: center; flex: 1; }
td { height: 21px; padding: 1px 2px 0; vertical-align: top; overflow: hidden; color: #000; font-size: 13px; line-height: 18px; border-right: 1px solid #d0d0d0; border-bottom: 1px solid #c9c9c9; }
td div { overflow: hidden; white-space: nowrap; }
td.name { padding-left: 16px; }
td.r { text-align: right; white-space: nowrap; }
td.num { color: #666; font-size: 12px; line-height: 16px; text-align: center; border-bottom: 0; background: linear-gradient(90deg, #fff, #c9c9c9) bottom / 100% 1px no-repeat; }
td:last-child { border-right-color: #888; }
.two td { height: 40px; }
.three td { height: 59px; }
.cur td { border-bottom-color: #777; }
.cur td.num { background: linear-gradient(90deg, #f4f4f4, #dcdcdc 30%); color: #31752f; font-weight: 700; }
td.pick { outline: 2px solid #31752f; outline-offset: -1px; }
.scroll { width: 16px; flex: none; display: flex; flex-direction: column; margin-bottom: 16px; padding-right: 1px; }
.scroll button { height: 15px; border: 1px solid #ababab; background: #fff; display: grid; place-items: center; }
.rail { flex: 1; background: #f0f0f0; }
.thumb { height: 75%; background: #fff; border: 1px solid #ababab; }

/* status bar */
.status { flex: none; height: 22px; background: #31752f; color: #fff; display: flex; align-items: center; padding: 0 9px 0 7px; font-size: 11px; }
.mode { display: flex; align-items: center; gap: 2px; margin-left: 34px; }
.views { margin-left: auto; display: flex; height: 100%; }
.views button { width: 38px; display: grid; place-items: center; }
.views .on { background: #245a23; }
.zoom { display: flex; align-items: center; gap: 2px; margin-left: 6px; color: #1c4a1b; font-weight: 700; font-size: 14px; }
.zoom input { appearance: none; width: 100px; height: 11px; margin: 0; background: linear-gradient(#e8f5e8, #e8f5e8) center / 100% 1px no-repeat; }
.zoom input::-webkit-slider-thumb { appearance: none; width: 1px; height: 5px; background: #fff; }

/* taskbar */
.taskbar { flex: none; height: 44px; background: #d4d0c8; border-top: 1px solid #f4f2ee; display: flex; align-items: center; gap: 2px; padding: 0 2px; color: #000; }
.app { width: 48px; height: 38px; display: flex; align-items: center; justify-content: center; border: 1px solid transparent; }
.frame { border-color: #fff #404040 #404040 #fff; box-shadow: inset -1px -1px #808080; }
.active { background: #fff; border-color: #404040 #fff #fff #404040; box-shadow: inset 1px 1px #808080; }
.start-btn { width: 51px; margin-right: 7px; font-weight: 700; font-size: 12px; gap: 1px; }
.tray-area { margin-left: auto; display: flex; align-items: center; gap: 3px; }
.lang { border-right: 1px solid #999; padding-right: 5px; line-height: 22px; height: 28px; font-size: 11px; }
.tray { height: 38px; display: flex; align-items: center; gap: 10px; padding: 0 1px 0 5px; border: 1px solid #808080; border-color: #808080 #fff #fff #808080; }
.tray time { text-align: center; font-family: "DejaVu Sans", sans-serif; font-size: 10px; line-height: 16px; margin-left: 2px; }
```
